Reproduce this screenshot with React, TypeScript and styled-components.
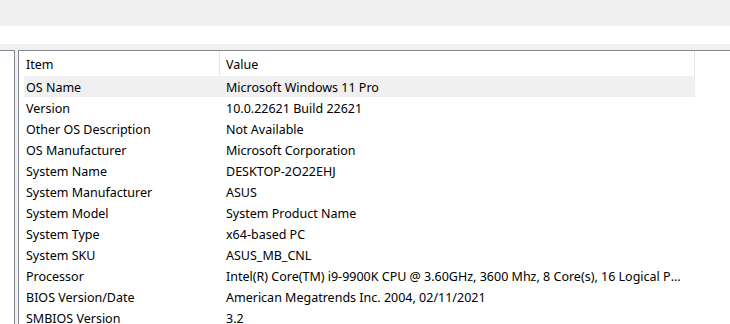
import React from 'react';
import styled, { createGlobalStyle } from 'styled-components';

const GlobalStyle = createGlobalStyle`
  html, body {
    margin: 0;
    padding: 0;
    background: #f0f0f0;
    overflow: hidden;
  }
  body {
    font-family: "Noto Sans", "Open Sans", sans-serif;
    font-size: 12.5px;
    color: #000;
  }
`;

type Info = { item: string; value: string };

const rows: Info[] = [
  { item: 'OS Name', value: 'Microsoft Windows 11 Pro' },
  { item: 'Version', value: '10.0.22621 Build 22621' },
  { item: 'Other OS Description', value: 'Not Available' },
  { item: 'OS Manufacturer', value: 'Microsoft Corporation' },
  { item: 'System Name', value: 'DESKTOP-2O22EHJ' },
  { item: 'System Manufacturer', value: 'ASUS' },
  { item: 'System Model', value: 'System Product Name' },
  { item: 'System Type', value: 'x64-based PC' },
  { item: 'System SKU', value: 'ASUS_MB_CNL' },
  {
    item: 'Processor',
    value: 'Intel(R) Core(TM) i9-9900K CPU @ 3.60GHz, 3600 Mhz, 8 Core(s), 16 Logical Processor(s)',
  },
  { item: 'BIOS Version/Date', value: 'American Megatrends Inc. 2004, 02/11/2021' },
  { item: 'SMBIOS Version', value: '3.2' },
];

const Window = styled.div`
  width: 730px;
  height: 324px;
  display: flex;
  flex-direction: column;
  overflow: hidden;
`;

const Toolbar = styled.div`
  height: 26px;
  background: #f0f0f0;
  flex-shrink: 0;
`;

const FindBand = styled.div`
  height: 18px;
  background: #ffffff;
  flex-shrink: 0;
`;

const Main = styled.div`
  flex: 1;
  display: flex;
  gap: 3px;
  padding-top: 6px;
  background: #f0f0f0;
  min-height: 0;
`;

const TreePane = styled.div`
  width: 14px;
  flex-shrink: 0;
  background: #ffffff;
  border-top: 1px solid #828790;
  border-right: 1px solid #828790;
`;

const ListPane = styled.div`
  flex: 1;
  background: #ffffff;
  border-top: 1px solid #828790;
  border-left: 1px solid #828790;
  padding-left: 5px;
  overflow: hidden;
`;

const Table = styled.div`
  width: 671px;
`;

const HeaderRow = styled.div`
  display: flex;
  height: 25px;
  align-items: stretch;
`;

const HeaderCell = styled.div<{ $width: number; $pad: number }>`
  width: ${p => p.$width}px;
  flex-shrink: 0;
  box-sizing: border-box;
  padding-left: ${p => p.$pad}px;
  padding-top: 1px;
  display: flex;
  align-items: center;
  border-right: 1px solid #e5e5e5;
`;

const Row = styled.div<{ $selected?: boolean }>`
  display: flex;
  height: 21px;
  align-items: center;
  padding-top: 1px;
  box-sizing: border-box;
  background: ${p => (p.$selected ? '#f0f0f0' : 'transparent')};
`;

const Cell = styled.div<{ $width: number; $pad: number }>`
  width: ${p => p.$width}px;
  flex-shrink: 0;
  box-sizing: border-box;
  padding-left: ${p => p.$pad}px;
  white-space: nowrap;
  overflow: hidden;
  text-overflow: ellipsis;
`;

const ITEM_W = 196;
const VALUE_W = 475;

export default function App() {
  return (
    <Window>
      <GlobalStyle />
      <Toolbar />
      <FindBand />
      <Main>
        <TreePane />
        <ListPane>
          <Table>
            <HeaderRow>
              <HeaderCell $width={ITEM_W} $pad={2}>Item</HeaderCell>
              <HeaderCell $width={VALUE_W} $pad={6}>Value</HeaderCell>
            </HeaderRow>
            {rows.map((r, i) => (
              <Row key={r.item} $selected={i === 0}>
                <Cell $width={ITEM_W} $pad={2}>{r.item}</Cell>
                <Cell $width={VALUE_W - 11} $pad={6}>{r.value}</Cell>
              </Row>
            ))}
          </Table>
        </ListPane>
      </Main>
    </Window>
  );
}
